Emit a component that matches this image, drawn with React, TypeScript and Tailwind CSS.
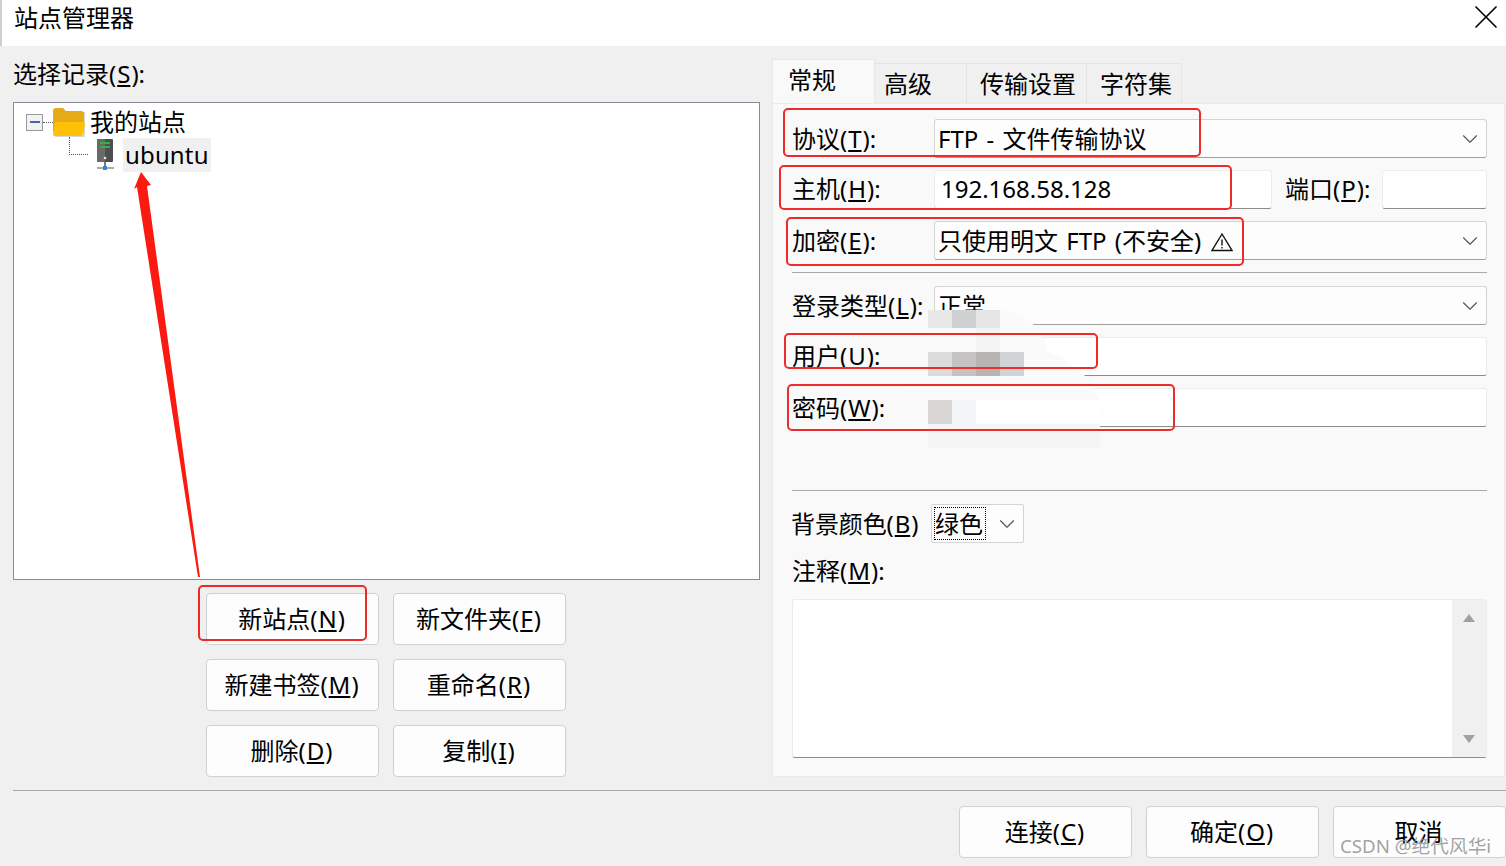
import { X, ChevronDown } from 'lucide-react'

const font = { fontFamily: '"Noto Sans", "Noto Sans CJK SC", sans-serif' }

function Label({ text, hot, tail = '):' }: { text: string; hot: string; tail?: string }) {
  return (
    <span className="whitespace-nowrap">
      {text}(<span className="underline underline-offset-2 px-px">{hot}</span>
      {tail}
    </span>
  )
}

function Btn({ text, hot, tail = ')' }: { text: string; hot?: string; tail?: string }) {
  return (
    <button className="w-[173px] h-[52px] bg-[#fdfdfd] border border-[#d0d0d0] rounded-[4px] text-[24px] leading-none text-black flex items-center justify-center pr-[2px]">
      {hot ? <Label text={text} hot={hot} tail={tail} /> : text}
    </button>
  )
}

function Combo({ children }: { children?: React.ReactNode }) {
  return (
    <div className="flex-1 h-[39px] bg-[#fdfdfd] border border-[#d4d4d4] border-b-[#a0a0a0] rounded-[3px] flex items-center pl-[3px] pr-[3px] text-[24px] leading-none">
      <span className="flex-1 flex items-center whitespace-nowrap [word-spacing:2px]">{children}</span>
      <ChevronDown size={26} strokeWidth={1} className="text-[#555]" />
    </div>
  )
}

function Field({ children }: { children?: React.ReactNode }) {
  return (
    <div className="flex-1 h-[39px] bg-white border border-[#ececec] border-b-[#8c8c8c] rounded-[3px] flex items-center pl-[6px] pb-[2px] text-[24px] leading-none">
      {children}
    </div>
  )
}

function Row({ label, children }: { label: React.ReactNode; children: React.ReactNode }) {
  return (
    <div className="flex items-center">
      <div className="w-[142px] text-[24px] leading-none">{label}</div>
      {children}
    </div>
  )
}

function ServerIcon() {
  return (
    <svg width="20" height="32" viewBox="0 0 20 32">
      <rect x="2" y="0" width="16" height="23" rx="1" fill="#4e4e4e" />
      <rect x="2" y="0" width="8" height="23" rx="1" fill="#6a6a6a" />
      <rect x="5" y="3" width="10" height="2" fill="#2fb344" />
      <rect x="5" y="7" width="10" height="2" fill="#2fb344" />
      <circle cx="10" cy="19" r="1.3" fill="#e4e4e4" />
      <rect x="9" y="23" width="2" height="5" fill="#777" />
      <rect x="2" y="28" width="17" height="2" fill="#aaa" />
      <rect x="8" y="27" width="4" height="4" fill="#3a86d0" />
    </svg>
  )
}

function FolderIcon() {
  return (
    <svg width="33" height="29" viewBox="0 0 33 29">
      <path d="M2 4h30v25H2z" fill="#d8d8d8" />
      <path d="M0 3a3 3 0 0 1 3-3h7l3 3h15a3 3 0 0 1 3 3v18H0z" fill="#e5ab17" />
      <path d="M4 14h26a2 2 0 0 1 2 2l-2 10a2 2 0 0 1-2 2H2a2 2 0 0 1-2-2l2-10a2 2 0 0 1 2-2z" fill="#ffc107" />
    </svg>
  )
}

const redBoxes = [
  'left-[783px] top-[108px] w-[418px] h-[49px]',
  'left-[779px] top-[165px] w-[453px] h-[45px]',
  'left-[786px] top-[217px] w-[458px] h-[49px]',
  'left-[784px] top-[333px] w-[314px] h-[36px]',
  'left-[787px] top-[384px] w-[388px] h-[47px]',
  'left-[198px] top-[585px] w-[169px] h-[56px]',
]

export default function App() {
  return (
    <div className="relative w-[1506px] h-[866px] overflow-hidden bg-[#f0f0f0] text-black flex flex-col" style={font}>
      {/* title bar */}
      <div className="h-[46px] bg-white border-l-2 border-[#cfcfcf] flex items-center justify-between pl-[12px] shrink-0">
        <span className="text-[24px] leading-none -mt-[10px]">站点管理器</span>
        <X size={40} strokeWidth={1} className="-mt-[12px]" />
      </div>

      <div className="flex flex-1 pl-[13px] gap-[12px]">
        {/* left column */}
        <div className="w-[747px] flex flex-col">
          <div className="h-[56px] flex items-center text-[24px] leading-none">
            <Label text="选择记录" hot="S" />
          </div>
          <div className="h-[478px] bg-white border border-[#8a8a96] pl-[12px] pt-[4px]">
            <div className="flex items-center h-[30px]">
              <span className="w-[17px] h-[17px] border border-[#9a9a9a] bg-[#f2f2f2] flex items-center justify-center">
                <span className="w-[10px] h-[2px] bg-[#4a62a8]" />
              </span>
              <span className="w-[10px] border-t border-dotted border-[#555]" />
              <FolderIcon />
              <span className="text-[24px] leading-none ml-[4px]">我的站点</span>
            </div>
            <div className="flex items-center h-[34px] ml-[43px] mt-[1px]">
              <span className="w-[19px] h-[18px] -mt-[18px] border-l border-b border-dotted border-[#555]" />
              <span className="ml-[7px]"><ServerIcon /></span>
              <span className="ml-[8px] w-[88px] h-[34px] pl-[2px] bg-[#f0f0f0] text-[24px] leading-[34px] tracking-[0.15px]">ubuntu</span>
            </div>
          </div>
          <div className="grid grid-cols-[173px_173px] gap-x-[14px] gap-y-[14px] ml-[193px] mt-[13px]">
            <Btn text="新站点" hot="N" />
            <Btn text="新文件夹" hot="F" />
            <Btn text="新建书签" hot="M" />
            <Btn text="重命名" hot="R" />
            <Btn text="删除" hot="D" />
            <Btn text="复制" hot="I" />
          </div>
        </div>

        {/* right column */}
        <div className="flex-1 flex flex-col mr-[1px] mt-[13px]">
          <div className="flex items-end h-[44px] text-[24px] leading-none">
            <div className="w-[103px] h-[44px] bg-[#f9f9f9] border border-b-0 border-[#e8e8e8] pl-[15px] pt-[8px] relative z-10">常规</div>
            <div className="w-[92px] h-[40px] border-t border-r border-[#e4e4e4] pl-[9px] pt-[8px]">高级</div>
            <div className="w-[120px] h-[40px] border-t border-r border-[#e4e4e4] pl-[13px] pt-[8px]">传输设置</div>
            <div className="w-[95px] h-[40px] border-t border-r border-[#e4e4e4] pl-[13px] pt-[8px]">字符集</div>
          </div>
          <div className="h-[674px] bg-[#f9f9f9] border border-[#ebebeb] pl-[19px] pr-[17px] pt-[15px] flex flex-col">
            <Row label={<Label text="协议" hot="T" />}>
              <Combo>FTP - 文件传输协议</Combo>
            </Row>
            <div className="flex items-center mt-[12px]">
              <div className="w-[142px] text-[24px] leading-none -mt-[2px]"><Label text="主机" hot="H" /></div>
              <Field>192.168.58.128</Field>
              <div className="w-[110px] pl-[13px] text-[24px] leading-none -mt-[2px]"><Label text="端口" hot="P" /></div>
              <div className="w-[105px]"><Field /></div>
            </div>
            <div className="mt-[12px]">
              <Row label={<Label text="加密" hot="E" />}>
                <Combo>
                  只使用明文 FTP (不安全)
                  <svg width="22" height="20" viewBox="0 0 22 20" className="ml-[10px] mt-[3px]" fill="none" stroke="#111" strokeWidth="1.4">
                    <path d="M11 2 1 18.5h20z" />
                    <path d="M11 7.5v6M11 15v1.6" />
                  </svg>
                </Combo>
              </Row>
            </div>
            <div className="border-t border-[#a8a8a8] mt-[12px] mb-[13px]" />
            <Row label={<Label text="登录类型" hot="L" />}>
              <Combo>正常</Combo>
            </Row>
            <div className="mt-[12px]">
              <Row label={<span className="block -mt-[2px]"><Label text="用户" hot="U" /></span>}><Field /></Row>
            </div>
            <div className="mt-[12px]">
              <Row label={<Label text="密码" hot="W" />}><Field /></Row>
            </div>
            <div className="border-t border-[#a8a8a8] mt-[63px]" />
            <div className="flex items-center mt-[13px]">
              <div className="w-[139px] text-[24px] leading-none -ml-px tracking-[-0.1px]"><Label text="背景颜色" hot="B" tail=")" /></div>
              <div className="w-[93px] h-[39px] bg-[#fdfdfd] border border-[#d4d4d4] rounded-[2px] flex items-center pl-[2px] text-[24px] leading-none ml-px">
                <span className="h-[33px] w-[52px] border border-dotted border-black flex items-center shrink-0">绿色</span>
                <ChevronDown size={26} strokeWidth={1} className="text-[#555] ml-[8px]" />
              </div>
            </div>
            <div className="h-[56px] flex items-center text-[24px] leading-none">
              <Label text="注释" hot="M" />
            </div>
            <div className="h-[159px] bg-white border border-[#ececec] border-b-[#8c8c8c] rounded-[3px] flex justify-end">
              <div className="w-[34px] bg-[#f0f0f0] flex flex-col items-center justify-between py-[14px]">
                <span className="w-0 h-0 border-x-[6px] border-x-transparent border-b-[8px] border-b-[#a0a0a0]" />
                <span className="w-0 h-0 border-x-[6px] border-x-transparent border-t-[8px] border-t-[#a0a0a0]" />
              </div>
            </div>
          </div>
        </div>
      </div>

      {/* footer */}
      <div className="h-[76px] ml-[13px] border-t border-[#a8a8a8] flex justify-end gap-[14px] pt-[15px] shrink-0">
        <Btn text="连接" hot="C" />
        <Btn text="确定" hot="O" />
        <Btn text="取消" />
      </div>

      {/* watermark blob and mosaic over the credentials */}
      <svg className="absolute left-0 top-0 pointer-events-none" width="1506" height="866">
        <path
          d="M912 330Q925 312 960 310H1000Q1040 316 1048 352Q1090 366 1103 410Q1104 444 1060 448H928V432Q902 428 904 405V376H928V330z"
          fill="#fafafa"
        />
        <path d="M976 400H1102V424H976z" fill="#ffffff" />
        <path d="M928 424H1100V448H928z" fill="#f5f5f5" />
      </svg>
      <div className="absolute left-[928px] top-[310px] w-[24px] h-[18px] bg-[#e8e8e8]" />
      <div className="absolute left-[952px] top-[310px] w-[24px] h-[18px] bg-[#cfd0d2]" />
      <div className="absolute left-[976px] top-[310px] w-[24px] h-[18px] bg-[#e6e6e6]" />
      <div className="absolute left-[976px] top-[328px] w-[24px] h-[24px] bg-[#f4f4f4]" />
      <div className="absolute left-[928px] top-[352px] w-[24px] h-[24px] bg-[#dcdcdc]" />
      <div className="absolute left-[952px] top-[352px] w-[24px] h-[24px] bg-[#c4c2c2]" />
      <div className="absolute left-[976px] top-[352px] w-[24px] h-[24px] bg-[#b8b4b2]" />
      <div className="absolute left-[1000px] top-[352px] w-[24px] h-[24px] bg-[#d0d3d6]" />
      <div className="absolute left-[928px] top-[400px] w-[24px] h-[24px] bg-[#d8d7d6]" />
      <div className="absolute left-[952px] top-[400px] w-[24px] h-[24px] bg-[#f2f6f8]" />

      {/* red annotations */}
      {redBoxes.map((c) => (
        <div key={c} className={`absolute border-2 border-[#ee2a2a] rounded-[5px] ${c}`} />
      ))}
      <svg className="absolute left-0 top-0 pointer-events-none" width="1506" height="866">
        <path d="M141 172 151 185 147 186 200 577 198 577 137 187 134 189z" fill="#fb1a10" />
      </svg>

      <span className="absolute left-[1340px] top-[837px] text-[18.7px] leading-none text-[#8a8a8a]/80 whitespace-nowrap">CSDN @绝代风华i</span>
    </div>
  )
}
